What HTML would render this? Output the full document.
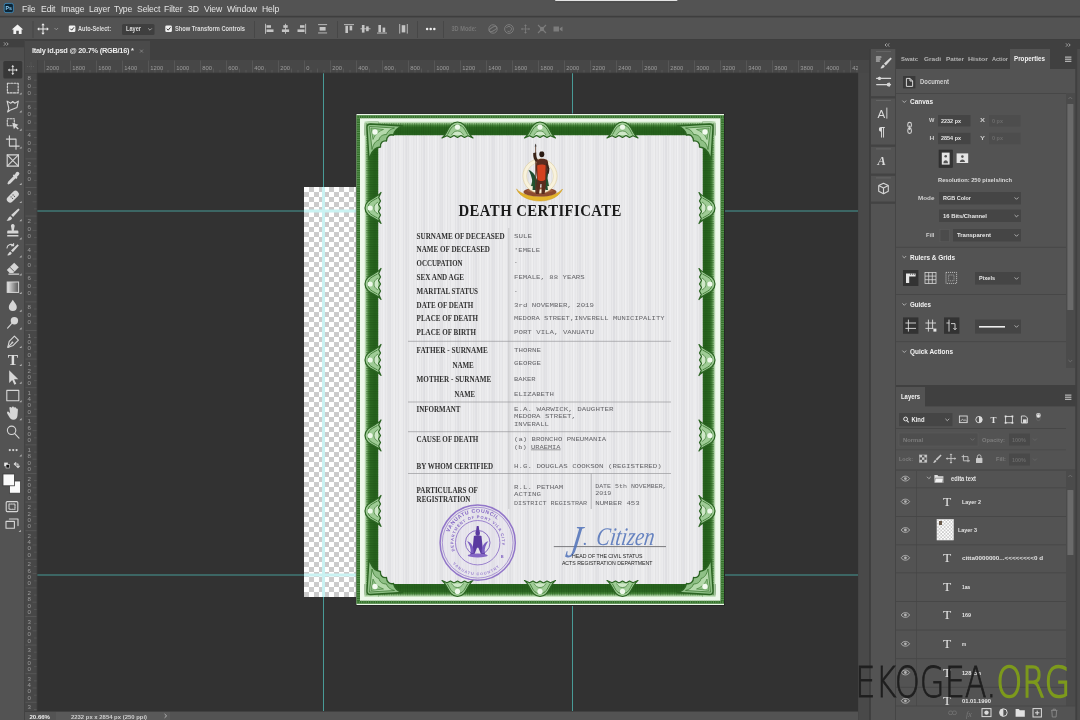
<!DOCTYPE html>
<html>
<head>
<meta charset="utf-8">
<title>Photoshop</title>
<style>
*{box-sizing:border-box;margin:0;padding:0}
html,body{width:1080px;height:720px;overflow:hidden;background:#535353;font-family:"Liberation Sans",sans-serif;color:#dcdcdc}
.abs{position:absolute}
#app{position:absolute;left:0;top:0;width:1080px;height:720px;overflow:hidden;background:#535353}
#menubar{left:0;top:0;width:1080px;height:17px;background:#535353}
#menubar span{position:absolute;top:3.5px;font-size:8.6px;color:#e4e4e4;letter-spacing:-0.1px;white-space:nowrap}
#optbar{left:0;top:16px;width:1080px;height:24px;background:#535353;border-top:1.5px solid #3e3e3e}
#optbar span{position:absolute;font-size:6.4px;color:#e0e0e0;white-space:nowrap;font-weight:bold;letter-spacing:-0.2px}
#tabrow{left:25px;top:40px;width:846px;height:20px;background:#404040}
#tab{left:0;top:1px;width:125px;height:19px;background:#4a4a4a}
#tab span{position:absolute;left:7px;top:5px;font-size:7.4px;font-weight:bold;color:#ececec;white-space:nowrap;letter-spacing:-0.25px}
#toolbar{left:0;top:40px;width:24px;height:680px;background:#535353}
#hruler{left:25px;top:60px;width:839px;height:13px;background:#4b4b4b}
#vruler{left:25px;top:73px;width:12px;height:638px;background:#4b4b4b}
#canvas{left:37px;top:73px;width:823px;height:638px;background:#323232;overflow:hidden}
#status{left:25px;top:711px;width:846px;height:9px;background:#535353}
#dockgap{left:860px;top:60px;width:11px;height:660px;background:#424242}
#dock{left:871px;top:40px;width:209px;height:680px;background:#424242}
svg text{white-space:pre}
svg,#menubar,#tab{will-change:transform}
</style>
</head>
<body>
<div id="app">
<div id="menubar" class="abs">
<span style="left:22px">File</span><span style="left:41px">Edit</span><span style="left:61px">Image</span><span style="left:89px">Layer</span><span style="left:114px">Type</span><span style="left:137px">Select</span><span style="left:164px">Filter</span><span style="left:188px">3D</span><span style="left:204px">View</span><span style="left:227px">Window</span><span style="left:262px">Help</span>
</div>
<div id="optbar" class="abs"></div>
<div id="tabrow" class="abs"><div id="tab" class="abs"><span>Italy id.psd @ 20.7% (RGB/16) *</span></div></div>
<div id="toolbar" class="abs"></div>
<div id="hruler" class="abs"></div>
<div id="vruler" class="abs"></div>
<div id="canvas" class="abs">
<svg class="abs" style="left:0;top:0" width="823" height="638" viewBox="37 73 823 638">
<defs>
<pattern id="chk" x="304" y="187" width="10" height="10" patternUnits="userSpaceOnUse"><rect width="10" height="10" fill="#ffffff"/><rect x="5" width="5" height="5" fill="#cbcbcb"/><rect y="5" width="5" height="5" fill="#cbcbcb"/></pattern>
<pattern id="paper" x="0" y="0" width="2.6" height="8" patternUnits="userSpaceOnUse"><rect width="2.6" height="8" fill="#ebebed"/><rect x="0" width="0.9" height="8" fill="#e1e1e4"/></pattern>
<pattern id="paper2" x="0" y="0" width="17.3" height="8" patternUnits="userSpaceOnUse"><rect x="2" width="1.4" height="8" fill="#ffffff" opacity="0.35"/><rect x="7.6" width="2.2" height="8" fill="#cfcfd4" opacity="0.3"/><rect x="12.8" width="1.2" height="8" fill="#ffffff" opacity="0.3"/></pattern>
<pattern id="guil" x="0" y="0" width="2" height="2" patternUnits="userSpaceOnUse"><rect width="2" height="2" fill="#2e6a24"/><rect width="1" height="1" fill="#3f7c35"/><rect x="1" y="1" width="1" height="1" fill="#255a1c"/></pattern>
<linearGradient id="bandV" x1="0" y1="0" x2="0" y2="1"><stop offset="0" stop-color="#d6ebd1"/><stop offset="0.13" stop-color="#9cc692"/><stop offset="0.27" stop-color="#4a8a3e"/><stop offset="0.42" stop-color="#2c6a22"/><stop offset="0.75" stop-color="#24601b"/><stop offset="1" stop-color="#2a6621"/></linearGradient>
<linearGradient id="bandVb" x1="0" y1="1" x2="0" y2="0"><stop offset="0" stop-color="#d6ebd1"/><stop offset="0.13" stop-color="#9cc692"/><stop offset="0.27" stop-color="#4a8a3e"/><stop offset="0.42" stop-color="#2c6a22"/><stop offset="0.75" stop-color="#24601b"/><stop offset="1" stop-color="#2a6621"/></linearGradient>
<linearGradient id="bandH" x1="0" y1="0" x2="1" y2="0"><stop offset="0" stop-color="#d6ebd1"/><stop offset="0.13" stop-color="#9cc692"/><stop offset="0.27" stop-color="#4a8a3e"/><stop offset="0.42" stop-color="#2c6a22"/><stop offset="0.75" stop-color="#24601b"/><stop offset="1" stop-color="#2a6621"/></linearGradient>
<linearGradient id="bandHr" x1="1" y1="0" x2="0" y2="0"><stop offset="0" stop-color="#d6ebd1"/><stop offset="0.13" stop-color="#9cc692"/><stop offset="0.27" stop-color="#4a8a3e"/><stop offset="0.42" stop-color="#2c6a22"/><stop offset="0.75" stop-color="#24601b"/><stop offset="1" stop-color="#2a6621"/></linearGradient>
<pattern id="hatV" width="2.3" height="4" patternUnits="userSpaceOnUse"><rect width="1.1" height="4" fill="#1f5217" opacity="0.45"/></pattern>
<pattern id="hatH" width="4" height="2.3" patternUnits="userSpaceOnUse"><rect width="4" height="1.1" fill="#1f5217" opacity="0.45"/></pattern>
<g id="orn">
<path d="M-15.5,16.5 C-10,13 -9,0.5 0,0.5 C9,0.5 10,13 15.5,16.5 L10.5,14.2 L7,16 L3.5,14 L0,16 L-3.5,14 L-7,16 L-10.5,14.2 Z" fill="#9fcc96" stroke="#2b6422" stroke-width="1.2" stroke-linejoin="round"/>
<path d="M-10,13 C-7,8 -6,3.5 0,3.5 C6,3.5 7,8 10,13" fill="none" stroke="#3d7a33" stroke-width="0.9"/>
<path d="M-6,13.5 C-4,10.5 -2.5,9.5 0,9.5 C2.5,9.5 4,10.5 6,13.5" fill="#cfe8c8" stroke="#3d7a33" stroke-width="0.7"/>
<circle cx="0" cy="5.6" r="2.6" fill="#eef8ea"/>
</g>
<g id="corner">
<path d="M2.5,6 C2.5,3.5 3.5,2.5 6,2.5 L38,4.5 C33,6 30,8.5 29,13.5 C25,12.5 22,15 22,19.5 C18,19 15.5,21.5 16,25.5 C11,26 8,29 6,34 L4.5,38 Z" fill="#8fc086" stroke="#2b6422" stroke-width="1.3" stroke-linejoin="round"/>
<path d="M5,5 L30,6.5 C25,8 23,10 22,13 C18,13 15,15 14.5,18.5 C11,19.5 9,22 7.5,28 Z" fill="#b4d9ab" stroke="#3d7a33" stroke-width="0.8"/>
<path d="M6.5,6.5 L19,8 C15,9.5 11,12 8.5,18 Z" fill="#8fc086" stroke="#3d7a33" stroke-width="0.6"/>
<circle cx="10.5" cy="10.5" r="2.7" fill="#f4fbf1"/>
</g>
</defs>
<rect x="304" y="187" width="54" height="410" fill="url(#chk)"/>
<rect x="323.0" y="73" width="1" height="638" fill="#4aa5a1" opacity="0.9"/>
<rect x="572.0" y="73" width="1" height="638" fill="#4aa5a1" opacity="0.9"/>
<rect x="37" y="210.5" width="823" height="1" fill="#4aa5a1" opacity="0.9"/>
<rect x="37" y="574.5" width="823" height="1" fill="#4aa5a1" opacity="0.9"/>
<rect x="322" y="187" width="3" height="410" fill="#c9f2f2"/>
<rect x="304" y="209.5" width="54" height="3" fill="#c9f2f2"/>
<rect x="304" y="573.5" width="54" height="3" fill="#c9f2f2"/>
<g>
<rect x="355.9" y="113.6" width="369.1" height="492.4" fill="#262626"/>
<rect x="356.5" y="114" width="367.5" height="491" fill="#eef8eb"/>
<path fill-rule="evenodd" fill="#34702a" d="M356.5,115.2H724V603.8H356.5Z M360.0,118.3V600.7H720.5V118.3Z"/>
<path fill="none" stroke="#6aa062" stroke-width="3" stroke-dasharray="1 1.3" opacity="0.7" d="M356.5,116.75H724 M356.5,602.25H724"/>
<path fill="none" stroke="#6aa062" stroke-width="3.4" stroke-dasharray="1 1.3" opacity="0.7" d="M358.25,118.3V600.7 M722.25,118.3V600.7"/>
<rect x="364.5" y="121.5" width="351.0" height="14.0" fill="url(#bandV)"/>
<rect x="364.5" y="584" width="351.0" height="13" fill="url(#bandVb)"/>
<rect x="364.5" y="121.5" width="14.0" height="475.5" fill="url(#bandH)"/>
<rect x="702.5" y="121.5" width="13.0" height="475.5" fill="url(#bandHr)"/>
<rect x="364.5" y="123.0" width="351.0" height="12.5" fill="url(#hatV)"/>
<rect x="364.5" y="584" width="351.0" height="11.5" fill="url(#hatV)"/>
<rect x="366.0" y="135.5" width="12.5" height="448.5" fill="url(#hatH)"/>
<rect x="702.5" y="135.5" width="11.5" height="448.5" fill="url(#hatH)"/>
<polygon points="364.5,121.5 378.5,135.5 378.5,121.5" fill="url(#bandV)"/>
<polygon points="715.5,121.5 702.5,135.5 702.5,121.5" fill="url(#bandV)"/>
<polygon points="364.5,597 378.5,584 378.5,597" fill="url(#bandVb)"/>
<polygon points="715.5,597 702.5,584 702.5,597" fill="url(#bandVb)"/>
<rect x="378.5" y="135.5" width="324.0" height="448.5" fill="url(#paper)"/>
<rect x="378.5" y="135.5" width="324.0" height="448.5" fill="url(#paper2)"/>
<use href="#orn" transform="translate(457.5,121.5)"/>
<use href="#orn" transform="translate(457.5,597) scale(1,-1)"/>
<use href="#orn" transform="translate(540,121.5)"/>
<use href="#orn" transform="translate(540,597) scale(1,-1)"/>
<use href="#orn" transform="translate(622.5,121.5)"/>
<use href="#orn" transform="translate(622.5,597) scale(1,-1)"/>
<use href="#orn" transform="translate(364.5,208) rotate(-90)"/>
<use href="#orn" transform="translate(715.5,208) rotate(90)"/>
<use href="#orn" transform="translate(364.5,284) rotate(-90)"/>
<use href="#orn" transform="translate(715.5,284) rotate(90)"/>
<use href="#orn" transform="translate(364.5,360) rotate(-90)"/>
<use href="#orn" transform="translate(715.5,360) rotate(90)"/>
<use href="#orn" transform="translate(364.5,435.5) rotate(-90)"/>
<use href="#orn" transform="translate(715.5,435.5) rotate(90)"/>
<use href="#orn" transform="translate(364.5,511) rotate(-90)"/>
<use href="#orn" transform="translate(715.5,511) rotate(90)"/>
<use href="#corner" transform="translate(364.5,121.5)"/>
<use href="#corner" transform="translate(715.5,121.5) scale(-1,1)"/>
<use href="#corner" transform="translate(364.5,597) scale(1,-1)"/>
<use href="#corner" transform="translate(715.5,597) scale(-1,-1)"/>
</g>
<style>
.ttl{font:bold 17.2px "Liberation Serif",serif;fill:#1b1b1b}
.lb{font:bold 7.5px "Liberation Serif",serif;fill:#303030}
.vl{font:5.9px "Liberation Mono",monospace;fill:#66666a}
.sg{font:4.9px "Liberation Sans",sans-serif;fill:#222}
.ln{stroke:#99999c;stroke-width:0.7}
</style>
<g>
<text class="ttl" transform="translate(458.5,216.2) scale(0.86,1)" x="0" y="0" textLength="189.5" lengthAdjust="spacing">DEATH CERTIFICATE</text>
<line class="ln" x1="408" y1="341.3" x2="671" y2="341.3"/>
<line class="ln" x1="408" y1="402" x2="671" y2="402"/>
<line class="ln" x1="408" y1="431.7" x2="671" y2="431.7"/>
<line class="ln" x1="408" y1="473.5" x2="671" y2="473.5"/>
<line class="ln" x1="508.8" y1="228" x2="508.8" y2="509" opacity="0.55"/>
<line class="ln" x1="591.2" y1="473.5" x2="591.2" y2="509"/>
<text x="416.6" y="239.3" textLength="88.1" lengthAdjust="spacingAndGlyphs" class="lb">SURNAME OF DECEASED</text>
<text x="416.6" y="252.2" textLength="73.4" lengthAdjust="spacingAndGlyphs" class="lb">NAME OF DECEASED</text>
<text x="416.6" y="265.6" textLength="46.0" lengthAdjust="spacingAndGlyphs" class="lb">OCCUPATION</text>
<text x="416.6" y="279.9" textLength="47.4" lengthAdjust="spacingAndGlyphs" class="lb">SEX AND AGE</text>
<text x="416.6" y="294.0" textLength="61.4" lengthAdjust="spacingAndGlyphs" class="lb">MARITAL STATUS</text>
<text x="416.6" y="307.8" textLength="56.7" lengthAdjust="spacingAndGlyphs" class="lb">DATE OF DEATH</text>
<text x="416.6" y="321.2" textLength="61.4" lengthAdjust="spacingAndGlyphs" class="lb">PLACE OF DEATH</text>
<text x="416.6" y="334.6" textLength="59.4" lengthAdjust="spacingAndGlyphs" class="lb">PLACE OF BIRTH</text>
<text x="416.6" y="353.3" textLength="71.2" lengthAdjust="spacingAndGlyphs" class="lb">FATHER - SURNAME</text>
<text x="452.4" y="367.8" textLength="21.4" lengthAdjust="spacingAndGlyphs" class="lb">NAME</text>
<text x="416.6" y="382.0" textLength="74.7" lengthAdjust="spacingAndGlyphs" class="lb">MOTHER - SURNAME</text>
<text x="454.5" y="396.8" textLength="20.5" lengthAdjust="spacingAndGlyphs" class="lb">NAME</text>
<text x="416.6" y="412.3" textLength="43.8" lengthAdjust="spacingAndGlyphs" class="lb">INFORMANT</text>
<text x="416.6" y="441.9" textLength="61.8" lengthAdjust="spacingAndGlyphs" class="lb">CAUSE OF DEATH</text>
<text x="416.6" y="468.7" textLength="76.6" lengthAdjust="spacingAndGlyphs" class="lb">BY WHOM CERTIFIED</text>
<text x="416.6" y="492.7" textLength="61.3" lengthAdjust="spacingAndGlyphs" class="lb">PARTICULARS OF</text>
<text x="416.6" y="502.0" textLength="53.8" lengthAdjust="spacingAndGlyphs" class="lb">REGISTRATION</text>
<text x="514.0" y="238.0" textLength="18.0" lengthAdjust="spacingAndGlyphs" class="vl">SULE</text>
<text x="514.0" y="251.6" textLength="26.0" lengthAdjust="spacingAndGlyphs" class="vl">'EMELE</text>
<text x="514.0" y="263.5" class="vl">-</text>
<text x="514.0" y="278.8" textLength="70.7" lengthAdjust="spacingAndGlyphs" class="vl">FEMALE, 88 YEARS</text>
<text x="514.0" y="292.5" class="vl">-</text>
<text x="514.0" y="307.0" textLength="80.0" lengthAdjust="spacingAndGlyphs" class="vl">3rd NOVEMBER, 2019</text>
<text x="514.0" y="320.2" textLength="150.5" lengthAdjust="spacingAndGlyphs" class="vl">MEDORA STREET,INVERELL MUNICIPALITY</text>
<text x="514.0" y="333.8" textLength="80.0" lengthAdjust="spacingAndGlyphs" class="vl">PORT VILA, VANUATU</text>
<text x="514.0" y="351.6" textLength="27.0" lengthAdjust="spacingAndGlyphs" class="vl">THORNE</text>
<text x="514.0" y="365.3" textLength="27.0" lengthAdjust="spacingAndGlyphs" class="vl">GEORGE</text>
<text x="514.0" y="381.2" textLength="21.6" lengthAdjust="spacingAndGlyphs" class="vl">BAKER</text>
<text x="514.0" y="396.2" textLength="39.9" lengthAdjust="spacingAndGlyphs" class="vl">ELIZABETH</text>
<text x="514.0" y="410.7" textLength="99.5" lengthAdjust="spacingAndGlyphs" class="vl">E.A. WARWICK, DAUGHTER</text>
<text x="514.0" y="417.9" textLength="61.9" lengthAdjust="spacingAndGlyphs" class="vl">MEDORA STREET,</text>
<text x="514.0" y="425.5" textLength="35.0" lengthAdjust="spacingAndGlyphs" class="vl">INVERALL</text>
<text x="514.0" y="441.0" textLength="92.2" lengthAdjust="spacingAndGlyphs" class="vl">(a) BRONCHO PNEUMANIA</text>
<text x="514.0" y="448.6" textLength="46.6" lengthAdjust="spacingAndGlyphs" class="vl">(b) <tspan text-decoration="underline">URAEMIA</tspan></text>
<text x="514.0" y="468.0" textLength="147.8" lengthAdjust="spacingAndGlyphs" class="vl">H.G. DOUGLAS COOKSON (REGISTERED)</text>
<text x="514.0" y="488.6" textLength="49.3" lengthAdjust="spacingAndGlyphs" class="vl">R.L. PETHAM</text>
<text x="514.0" y="495.9" textLength="27.0" lengthAdjust="spacingAndGlyphs" class="vl">ACTING</text>
<text x="514.0" y="505.3" textLength="73.2" lengthAdjust="spacingAndGlyphs" class="vl">DISTRICT REGISTRAR</text>
<text x="595.2" y="487.8" textLength="71.4" lengthAdjust="spacingAndGlyphs" class="vl">DATE 5th NOVEMBER,</text>
<text x="595.2" y="494.5" textLength="16.1" lengthAdjust="spacingAndGlyphs" class="vl">2019</text>
<text x="595.2" y="505.3" textLength="44.6" lengthAdjust="spacingAndGlyphs" class="vl">NUMBER 453</text>
</g>
<g>
<g>
<path d="M516.5,189 C520,197.5 531,201 540,201 C549,201 559,197.5 562.5,189 C558,194.5 549,196.5 540,196.5 C531,196.5 521,194.5 516.5,189 Z" fill="#e3b32a" stroke="#c9951a" stroke-width="0.5"/>
<ellipse cx="540" cy="192" rx="16.5" ry="4.6" fill="#8c4a30"/><ellipse cx="540" cy="190.6" rx="13" ry="2.4" fill="#a05c3c"/>
<circle cx="540" cy="176" r="15.3" fill="none" stroke="#f8f2dc" stroke-width="3.6"/>
<circle cx="540" cy="176" r="17.1" fill="none" stroke="#dccb98" stroke-width="0.6"/><circle cx="540" cy="176" r="13.5" fill="none" stroke="#e2d4a6" stroke-width="0.5"/>
<path d="M528.5,170 C533,171 537,177 538,184 L536,190 L532.5,190 C533.5,184 532,176 528.5,170 Z" fill="#1f4d30"/>
<path d="M549.5,168 C546,171 543.5,177 544,184 L545.5,190 L548,190 C546.5,183 547.5,175 549.5,168 Z" fill="#1f4d30"/>
<path d="M531,186 L533,178 L535,186 Z M546,186 L547.5,178 L549,186 Z" fill="#24552f"/>
<line x1="535.6" y1="144.5" x2="535.6" y2="193" stroke="#5b3a26" stroke-width="0.8"/>
<path d="M535.6,143.5 l0.9,3 l-1.8,0 Z" fill="#444"/>
<path d="M533.2,153 C533,157 534,160.5 536.5,162 L538.5,160.5 C536.5,158.5 536,155.5 536.2,152.5 Z" fill="#3a2418"/>
<ellipse cx="541.8" cy="154.2" rx="2.5" ry="3" fill="#2a1a12"/>
<path d="M541.6,148.2 l0.7,3 l-1.4,0 Z" fill="#eee"/>
<path d="M536.5,160.5 C539,158 545,158 547.5,160.5 C549,164 548,168 547,171 L546,181 C546,184 545.5,190 544.5,194 L541.5,194 L541.5,184 L540.5,184 L539,194 L536,194 C536,188 536.5,182 537,178 C536,173 535.5,166 536.5,160.5 Z" fill="#5a2c1e"/>
<path d="M537.2,165.5 C539.5,164.3 543.5,164.3 545.6,165.5 L545.2,179.5 C543,181.6 540,181.6 537.6,179.5 Z" fill="#d4421f"/>
<path d="M547,163 C549.5,166 550,170 548.5,174 L546.8,173 C547.6,169.5 547.4,166.5 546,164.5 Z" fill="#3a2418"/>
</g>
<g fill="none" stroke="#9276c9">
<circle cx="477.7" cy="542.7" r="37.6" stroke-width="1.5" fill="#e2dcf0" fill-opacity="0.3"/>
<circle cx="477.7" cy="542.7" r="35.4" stroke-width="0.7"/>
<circle cx="477.7" cy="542.7" r="22.2" stroke-width="0.9"/>
<circle cx="477.7" cy="542.7" r="12.3" stroke-width="0.9" stroke="#7c5cbc"/>
</g>
<defs><path id="st1" d="M449.32,532.37 A30.2,30.2 0 0 1 498.30,520.61" fill="none"/><path id="st2" d="M454.87,551.01 A24.3,24.3 0 1 1 501.70,546.50" fill="none"/><path id="st3" d="M452.73,563.65 A32.6,32.6 0 0 0 501.93,564.51" fill="none"/></defs>
<g style="font:bold 5.2px 'Liberation Sans',sans-serif" fill="#8466c4">
<text><textPath href="#st1" textLength="58" lengthAdjust="spacing">VANUATU COUNCIL</textPath></text>
<text style="font-size:4px"><textPath href="#st2" textLength="87" lengthAdjust="spacing">DEPARTMENT OF PORT VILA CITY</textPath></text>
<text style="font-size:3.8px" fill="#9a80d0"><textPath href="#st3" textLength="52" lengthAdjust="spacing">VANUATU COUNTRY</textPath></text>
<text x="500.8" y="557.5" style="font-size:4px">B</text>
</g>
<g fill="#5a3aa0" transform="translate(477.7,543.7) scale(1.18) translate(-477.7,-542.7)">
<path d="M476.9,527.7 l1.6,0 l0.6,4 l-2.8,0 Z"/>
<ellipse cx="477.7" cy="533.7" rx="1.9" ry="2.3"/>
<path d="M474.5,536.2 C476.7,535.2 478.7,535.2 480.9,536.2 L481.9,545.7 L484.2,552.2 L480.7,552.2 L478.3,546.2 L477.09999999999997,546.2 L474.7,552.2 L471.2,552.2 L473.5,545.7 Z"/>
<path d="M468.7,540.7 C472.7,541.7 474.7,545.7 474.2,550.7 L471.7,550.7 C472.2,546.7 470.7,543.2 468.7,540.7 Z M486.7,540.7 C482.7,541.7 480.7,545.7 481.2,550.7 L483.7,550.7 C483.2,546.7 484.7,543.2 486.7,540.7 Z" fill="#7a5cc0"/>
<ellipse cx="477.7" cy="552.7" rx="8.5" ry="1.6" fill="#8466c4"/>
</g>
<line x1="553.8" y1="546.6" x2="666" y2="546.6" stroke="#6e6e72" stroke-width="0.9"/>
<g fill="#5878bc" opacity="0.9" style="font-family:'Liberation Serif',serif;font-style:italic">
<text x="564.5" y="557.3" font-size="46" transform="skewX(-10)" style="transform-origin:564.5px 557.3px" textLength="14" lengthAdjust="spacingAndGlyphs">J</text>
<text x="583" y="545.4" font-size="18">.</text>
<text x="595.5" y="544.6" font-size="25.5" transform="skewX(-8)" style="transform-origin:595px 544.6px" textLength="58" lengthAdjust="spacingAndGlyphs">Citizen</text>
</g>
<text class="sg" x="571.9" y="558.2" textLength="70.6" lengthAdjust="spacingAndGlyphs">HEAD OF THE CIVIL STATUS</text>
<text class="sg" x="561.9" y="565" textLength="90.6" lengthAdjust="spacingAndGlyphs">ACTS REGISTRATION DEPARTMENT</text>
</g>

</svg>
</div>
<svg class="abs" style="left:0;top:0" width="1080" height="720" viewBox="0 0 1080 720" font-family="Liberation Sans, sans-serif">
<rect x="4.2" y="3.4" width="9.2" height="9.2" fill="#0c2638" rx="1.8" stroke="#3b8fc4" stroke-width="0.8"/>
<text x="5.6" y="10.4" font-size="5.2" fill="#8fd0f8" font-weight="bold">Ps</text>
<rect x="555" y="-1" width="122.5" height="2" fill="#e4e4e4" rx="1"/>
<rect x="556" y="1.6" width="120.5" height="0.8" fill="#494949"/>
<rect x="0" y="15.8" width="1080" height="1.6" fill="#3e3e3e"/>
<rect x="0" y="39" width="1080" height="1" fill="#3e3e3e"/>
<path d="M17.5,24.5 L11.8,29.6 L13.4,29.6 L13.4,34 L16.2,34 L16.2,30.8 L18.8,30.8 L18.8,34 L21.6,34 L21.6,29.6 L23.2,29.6 Z" fill="#f2f2f2"/>
<rect x="32.5" y="21" width="1" height="17" fill="#474747"/>
<g transform="translate(43,29) scale(1)" stroke="#ececec" stroke-width="1" fill="#ececec"><path d="M0,-4.6V4.6M-4.6,0H4.6" fill="none"/><path d="M0,-5.8l1.7,2h-3.4zM0,5.8l1.7,-2h-3.4zM-5.8,0l2,-1.7v3.4zM5.8,0l-2,-1.7v3.4z" stroke="none"/></g>
<path d="M54.5,28 l1.8,1.8 l1.8,-1.8" fill="none" stroke="#9a9a9a" stroke-width="0.9"/>
<rect x="68.8" y="25.4" width="6.6" height="6.6" fill="#f0f0f0" rx="1.3"/>
<path d="M70.3,28.7 l1.4,1.5 l2.3,-2.9" fill="none" stroke="#333" stroke-width="1"/>
<text x="78" y="31.2" textLength="33.0" lengthAdjust="spacingAndGlyphs" font-size="6.3" fill="#dedede" font-weight="bold">Auto-Select:</text>
<rect x="122" y="24" width="32.5" height="11" fill="#3f3f3f" rx="1.5"/>
<text x="126" y="31.4" textLength="15.0" lengthAdjust="spacingAndGlyphs" font-size="6.3" fill="#dedede" font-weight="bold">Layer</text>
<path d="M148.2,28.4 l1.8,1.8 l1.8,-1.8" fill="none" stroke="#b0b0b0" stroke-width="0.9"/>
<rect x="165.3" y="25.4" width="6.6" height="6.6" fill="#f0f0f0" rx="1.3"/>
<path d="M166.8,28.7 l1.4,1.5 l2.3,-2.9" fill="none" stroke="#333" stroke-width="1"/>
<text x="175" y="31.2" textLength="70.0" lengthAdjust="spacingAndGlyphs" font-size="6.3" fill="#dedede" font-weight="bold">Show Transform Controls</text>
<rect x="254" y="21" width="1" height="17" fill="#474747"/>
<rect x="265" y="23.8" width="0.9" height="10" fill="#c4c4c4"/>
<rect x="266.5" y="25.2" width="4.5" height="2.6" fill="#c4c4c4"/>
<rect x="266.5" y="29.400000000000002" width="7" height="2.6" fill="#c4c4c4"/>
<rect x="285.05" y="23.8" width="0.9" height="10" fill="#c4c4c4"/>
<rect x="283.3" y="25.2" width="4.4" height="2.6" fill="#c4c4c4"/>
<rect x="281.9" y="29.400000000000002" width="7.2" height="2.6" fill="#c4c4c4"/>
<rect x="305.2" y="23.8" width="0.9" height="10" fill="#c4c4c4"/>
<rect x="300" y="25.2" width="4.5" height="2.6" fill="#c4c4c4"/>
<rect x="297.5" y="29.400000000000002" width="7" height="2.6" fill="#c4c4c4"/>
<rect x="318.1" y="24.200000000000003" width="9" height="0.9" fill="#c4c4c4"/>
<rect x="318.1" y="32.5" width="9" height="0.9" fill="#c4c4c4"/>
<rect x="319.6" y="27.0" width="6" height="3.6" fill="#c4c4c4"/>
<rect x="337" y="21" width="1" height="17" fill="#474747"/>
<rect x="344" y="24.200000000000003" width="10" height="0.9" fill="#c4c4c4"/>
<rect x="345.4" y="25.8" width="2.6" height="7.2" fill="#c4c4c4"/>
<rect x="349.6" y="25.8" width="2.6" height="4.6" fill="#c4c4c4"/>
<rect x="360.5" y="28.35" width="10" height="0.9" fill="#c4c4c4"/>
<rect x="361.9" y="25.0" width="2.6" height="7.6" fill="#c4c4c4"/>
<rect x="366.1" y="26.400000000000002" width="2.6" height="4.8" fill="#c4c4c4"/>
<rect x="377" y="32.6" width="10" height="0.9" fill="#c4c4c4"/>
<rect x="378.4" y="25.0" width="2.6" height="7.2" fill="#c4c4c4"/>
<rect x="382.6" y="27.6" width="2.6" height="4.6" fill="#c4c4c4"/>
<rect x="399.3" y="24.0" width="0.9" height="9.6" fill="#c4c4c4"/>
<rect x="406.8" y="24.0" width="0.9" height="9.6" fill="#c4c4c4"/>
<rect x="401.7" y="25.2" width="3.6" height="7.2" fill="#c4c4c4"/>
<rect x="417" y="21" width="1" height="17" fill="#474747"/>
<circle cx="427.09999999999997" cy="29" r="1.25" fill="#f0f0f0"/>
<circle cx="430.7" cy="29" r="1.25" fill="#f0f0f0"/>
<circle cx="434.3" cy="29" r="1.25" fill="#f0f0f0"/>
<rect x="443" y="21" width="1" height="17" fill="#474747"/>
<text x="451.5" y="31.2" textLength="25.2" lengthAdjust="spacingAndGlyphs" font-size="6.3" fill="#777" font-weight="bold">3D Mode:</text>
<g fill="none" stroke="#7c7c7c" stroke-width="1"><circle cx="493" cy="29" r="4.2"/><ellipse cx="493" cy="29" rx="4.2" ry="1.7" transform="rotate(-30 493 29)"/><circle cx="509" cy="29" r="4.4"/><path d="M506.5,28 a2.6,2.6 0 1 1 1,3.2"/></g>
<g transform="translate(525.5,29) scale(0.8)" stroke="#7c7c7c" stroke-width="1" fill="#7c7c7c"><path d="M0,-4.6V4.6M-4.6,0H4.6" fill="none"/><path d="M0,-5.8l1.7,2h-3.4zM0,5.8l1.7,-2h-3.4zM-5.8,0l2,-1.7v3.4zM5.8,0l-2,-1.7v3.4z" stroke="none"/></g>
<g stroke="#7c7c7c" stroke-width="1.1" fill="#7c7c7c"><path d="M538,25 l8,8 M546,25 l-8,8" fill="none"/><circle cx="542" cy="29" r="1.6"/></g>
<path d="M553.5,26.5 h5.5 v5 h-5.5 z M559.8,28.2 l2.7,-1.6 v4.8 l-2.7,-1.6 z" fill="#7c7c7c"/>
<path d="M140,49.6 l3,3 M143,49.6 l-3,3" stroke="#8a8a8a" stroke-width="0.8" fill="none"/>
<rect x="0" y="40" width="25" height="7.6" fill="#404040"/>
<rect x="0" y="47.6" width="24" height="13" fill="#4e4e4e"/>
<path d="M4,42.4 l1.6,1.6 l-1.6,1.6 M6.6,42.4 l1.6,1.6 l-1.6,1.6" fill="none" stroke="#bdbdbd" stroke-width="0.8"/>
<rect x="24" y="40" width="1" height="680" fill="#434343"/>
<rect x="3.3" y="61" width="19" height="17.4" fill="#383838" rx="1.5"/>
<g transform="translate(12.8,70) scale(0.85)" stroke="#ececec" stroke-width="1" fill="#ececec"><path d="M0,-4.6V4.6M-4.6,0H4.6" fill="none"/><path d="M0,-5.8l1.7,2h-3.4zM0,5.8l1.7,-2h-3.4zM-5.8,0l2,-1.7v3.4zM5.8,0l-2,-1.7v3.4z" stroke="none"/></g>
<g transform="translate(0.8,0.5)">
<rect x="6.6" y="82.8" width="10.8" height="9.6" fill="none" stroke="#d6d6d6" stroke-width="1.1" stroke-linejoin="round" stroke-linecap="round" stroke-dasharray="2 1.3"/>
<path d="M20.8,94.10000000000001 v-2.2 l-2.2,2.2 z" fill="#b5b5b5"/>
</g>
<g transform="translate(0.8,2.1)">
<path d="M6.3,99 l3.6,2.2 l2,-1.8 l2.2,1.8 l3.4,-2.2 l-1.3,6.4 l-3.8,1.5 l-3.2,1.2 l-2.4,1.8 l1.2,-3.6 z" fill="none" stroke="#d6d6d6" stroke-width="1.1" stroke-linejoin="round" stroke-linecap="round"/>
<path d="M20.8,110.4 v-2.2 l-2.2,2.2 z" fill="#b5b5b5"/>
</g>
<g transform="translate(0.8,1.3)">
<path d="M6.5,117.5 h7 v7 h-7 z" fill="none" stroke="#d6d6d6" stroke-width="1.1" stroke-linejoin="round" stroke-linecap="round" stroke-dasharray="1.6 1.2"/><path d="M11.5,121.5 l1.6,6.4 l1.5,-2 l2.4,2.4 l1,-1 l-2.4,-2.4 l2,-1.4 z" fill="#d6d6d6"/>
<path d="M20.8,129.4 v-2.2 l-2.2,2.2 z" fill="#b5b5b5"/>
</g>
<g transform="translate(0.8,1.5)">
<path d="M8.6,134.4 v10.2 h9.8 M5.6,137.6 h9.6 v10.2" fill="none" stroke="#d6d6d6" stroke-width="1.1" stroke-linejoin="round" stroke-linecap="round" stroke-width="1.3"/>
<path d="M20.8,147.1 v-2.2 l-2.2,2.2 z" fill="#b5b5b5"/>
</g>
<g transform="translate(0.8,1.5)">
<rect x="6.4" y="153.4" width="11.2" height="11.2" fill="none" stroke="#d6d6d6" stroke-width="1.1" stroke-linejoin="round" stroke-linecap="round"/><path d="M6.4,153.4 l11.2,11.2 M17.6,153.4 l-11.2,11.2" fill="none" stroke="#d6d6d6" stroke-width="1.1" stroke-linejoin="round" stroke-linecap="round" stroke-width="0.9"/>
</g>
<g transform="translate(0.8,0.6)">
<path d="M15.2,171.8 a1.9,1.9 0 0 1 2.8,2.7 l-2,2 l0.7,0.7 l-1.2,1.2 l-0.7,-0.7 l-5.2,5.2 l-2.2,0.9 l-0.8,-0.8 l0.9,-2.2 l5.2,-5.2 l-0.7,-0.7 l1.2,-1.2 l0.7,0.7 z" fill="#d6d6d6"/>
<path d="M20.8,184.4 v-2.2 l-2.2,2.2 z" fill="#b5b5b5"/>
</g>
<g transform="translate(0.8,0.7)">
<g transform="rotate(-45 12 196)"><rect x="5" y="192.8" width="14" height="6.4" rx="3" fill="#d6d6d6"/><circle cx="10.6" cy="195" r="0.6" fill="#535353"/><circle cx="13.4" cy="195" r="0.6" fill="#535353"/><circle cx="10.6" cy="197" r="0.6" fill="#535353"/><circle cx="13.4" cy="197" r="0.6" fill="#535353"/></g>
<path d="M20.8,202.4 v-2.2 l-2.2,2.2 z" fill="#b5b5b5"/>
</g>
<g transform="translate(0.8,0.8)">
<path d="M17.6,207.6 l1.3,1.3 l-6.6,7.4 l-2,-2 z M9.4,215.4 l1.9,1.9 c-0.6,2.2 -3,3.2 -5.6,2.6 c1.6,-0.8 1.6,-3.4 3.7,-4.5 z" fill="#d6d6d6"/>
<path d="M20.8,220.4 v-2.2 l-2.2,2.2 z" fill="#b5b5b5"/>
</g>
<g transform="translate(0.8,0.4)">
<path d="M10.3,226.4 a1.9,1.9 0 1 1 3.4,0 l-0.7,3.6 h3.6 a1,1 0 0 1 1,1 v2.2 h-11.2 v-2.2 a1,1 0 0 1 1,-1 h3.6 z M6.4,234.6 h11.2 v1.6 h-11.2 z" fill="#d6d6d6"/>
<path d="M20.8,239.1 v-2.2 l-2.2,2.2 z" fill="#b5b5b5"/>
</g>
<g transform="translate(0.8,1)">
<path d="M16.8,243.2 l1.2,1.2 l-6,6.8 l-1.8,-1.8 z M9.4,250.4 l1.6,1.6 c-0.5,1.9 -2.6,2.8 -4.8,2.3 c1.4,-0.7 1.4,-3 3.2,-3.9 z" fill="#d6d6d6"/><path d="M6.2,247 a3.8,3.8 0 0 1 6.4,-2.6 M12.8,242.6 v2.2 h-2.2" fill="none" stroke="#d6d6d6" stroke-width="1.1" stroke-linejoin="round" stroke-linecap="round" stroke-width="0.9"/>
<path d="M20.8,256.4 v-2.2 l-2.2,2.2 z" fill="#b5b5b5"/>
</g>
<g transform="translate(0.8,1.1)">
<path d="M13.4,261.6 l4.6,4.6 l-5.6,5.6 h-3.6 l-2.8,-2.8 z" fill="#d6d6d6"/><path d="M8,273 h10" fill="none" stroke="#d6d6d6" stroke-width="1.1" stroke-linejoin="round" stroke-linecap="round" stroke-width="0.9"/><path d="M9,266 l4.6,4.6" stroke="#535353" stroke-width="0.9"/>
<path d="M20.8,274.4 v-2.2 l-2.2,2.2 z" fill="#b5b5b5"/>
</g>
<g transform="translate(0.8,2)">
<defs><linearGradient id="tg" x1="0" x2="1"><stop offset="0" stop-color="#e8e8e8"/><stop offset="1" stop-color="#555"/></linearGradient></defs><rect x="6.4" y="280" width="11.4" height="10.4" fill="url(#tg)" stroke="#d6d6d6" stroke-width="1"/>
<path d="M20.8,291.9 v-2.2 l-2.2,2.2 z" fill="#b5b5b5"/>
</g>
<g transform="translate(0.8,0.3)">
<path d="M12,299.4 c1.6,2.6 4,4.8 4,7.4 a4,4 0 0 1 -8,0 c0,-2.6 2.4,-4.8 4,-7.4 z" fill="#d6d6d6"/>
<path d="M20.8,311.4 v-2.2 l-2.2,2.2 z" fill="#b5b5b5"/>
</g>
<g transform="translate(0.8,0.4)">
<circle cx="13.6" cy="320.4" r="3.7" fill="#d6d6d6"/><path d="M10.8,323.2 l-4,4.6" fill="none" stroke="#d6d6d6" stroke-width="1.1" stroke-linejoin="round" stroke-linecap="round" stroke-width="1.8"/>
<path d="M20.8,329.09999999999997 v-2.2 l-2.2,2.2 z" fill="#b5b5b5"/>
</g>
<g transform="translate(0.8,-0.2)">
<path d="M7,347.6 l1.4,-6 l5.2,-5.2 l4,4 l-5.2,5.2 z" fill="none" stroke="#d6d6d6" stroke-width="1.1" stroke-linejoin="round" stroke-linecap="round"/><circle cx="11.6" cy="342.6" r="1" fill="#d6d6d6"/><path d="M7.2,347.4 l3.6,-3.8" fill="none" stroke="#d6d6d6" stroke-width="1.1" stroke-linejoin="round" stroke-linecap="round" stroke-width="0.8"/>
<path d="M20.8,348.09999999999997 v-2.2 l-2.2,2.2 z" fill="#b5b5b5"/>
</g>
<g transform="translate(0.8,0.6)">
<text x="12" y="364.6" text-anchor="middle" font-family="Liberation Serif, serif" font-size="15.5" font-weight="bold" fill="#dcdcdc">T</text>
<path d="M20.8,365.4 v-2.2 l-2.2,2.2 z" fill="#b5b5b5"/>
</g>
<g transform="translate(0.8,0.7)">
<path d="M8.4,369.6 v12.6 l3,-2.8 l2.2,4.6 l1.9,-0.9 l-2.2,-4.5 h4.2 z" fill="#d6d6d6"/>
<path d="M20.8,383.09999999999997 v-2.2 l-2.2,2.2 z" fill="#b5b5b5"/>
</g>
<g transform="translate(0.8,0.8)">
<rect x="6" y="389.6" width="12" height="10.4" fill="none" stroke="#d6d6d6" stroke-width="1.1" stroke-linejoin="round" stroke-linecap="round"/>
<path d="M20.8,401.4 v-2.2 l-2.2,2.2 z" fill="#b5b5b5"/>
</g>
<g transform="translate(0.8,0.9)">
<path d="M8.2,415.6 c-1.6,-2.6 -2.6,-4 -1.6,-4.8 c0.9,-0.7 1.8,0.5 2.8,1.8 l-0.8,-5.2 c-0.2,-1.5 1.6,-1.7 1.9,-0.3 l0.6,-1 c0.6,-1 2,-0.6 2,0.6 l0.5,-0.2 c0.9,-0.5 1.9,0.1 1.8,1.2 c1,-0.3 1.8,0.3 1.7,1.4 l-0.4,5.4 c-0.2,2.4 -1.4,4.4 -4.2,4.4 c-2.2,0 -3.4,-1.4 -4.3,-3.3 z" fill="#d6d6d6"/>
<path d="M20.8,419.4 v-2.2 l-2.2,2.2 z" fill="#b5b5b5"/>
</g>
<g transform="translate(0.8,0.3)">
<circle cx="10.8" cy="430" r="4.2" fill="none" stroke="#d6d6d6" stroke-width="1.1" stroke-linejoin="round" stroke-linecap="round" stroke-width="1.4"/><path d="M14,433.4 l4.2,4.4" fill="none" stroke="#d6d6d6" stroke-width="1.1" stroke-linejoin="round" stroke-linecap="round" stroke-width="2"/>
</g>
<g transform="translate(0.8,0.1)">
<circle cx="9.0" cy="450" r="1.1" fill="#d6d6d6"/>
<circle cx="12.4" cy="450" r="1.1" fill="#d6d6d6"/>
<circle cx="15.8" cy="450" r="1.1" fill="#d6d6d6"/>
<path d="M20.8,456.4 v-2.2 l-2.2,2.2 z" fill="#b5b5b5"/>
</g>
<rect x="4.2" y="462.6" width="3.6" height="3.6" fill="#e8e8e8"/>
<rect x="6" y="464.4" width="3.6" height="3.6" fill="#111" stroke="#e8e8e8" stroke-width="0.6"/>
<path d="M14.4,464 h3.6 v3.6 M15.8,462.6 l-1.5,1.4 l1.5,1.4 M16.6,466.2 l1.4,1.5 l1.4,-1.5" fill="none" stroke="#d6d6d6" stroke-width="1.1" stroke-linejoin="round" stroke-linecap="round" stroke-width="0.8"/>
<rect x="9.4" y="481" width="11.2" height="12.2" fill="#fafafa" stroke="#3a3a3a" stroke-width="0.8"/>
<rect x="3" y="474" width="11.4" height="11.8" fill="#fafafa" stroke="#3a3a3a" stroke-width="0.8"/>
<rect x="6.2" y="501.6" width="11.6" height="10" rx="1" fill="none" stroke="#d6d6d6" stroke-width="1.1" stroke-linejoin="round" stroke-linecap="round"/><rect x="9" y="504" width="6" height="5.2" fill="none" stroke="#d6d6d6" stroke-width="1.1" stroke-linejoin="round" stroke-linecap="round" stroke-width="0.7" stroke-dasharray="1.2 1"/>
<rect x="6" y="521.4" width="8.4" height="6.8" fill="none" stroke="#d6d6d6" stroke-width="1.1" stroke-linejoin="round" stroke-linecap="round"/><path d="M9.4,519 h8.6 v6.6" fill="none" stroke="#d6d6d6" stroke-width="1.1" stroke-linejoin="round" stroke-linecap="round"/>
<path d="M20.8,531.9 v-2.2 l-2.2,2.2 z" fill="#b5b5b5"/>
<rect x="25" y="60" width="839" height="13" fill="#474747"/>
<rect x="25" y="73" width="12" height="638" fill="#474747"/>
<rect x="25" y="72.5" width="839" height="0.8" fill="#3c3c3c"/>
<rect x="36.6" y="60" width="0.8" height="651" fill="#3c3c3c"/>
<rect x="25" y="60" width="12" height="13" fill="#4a4a4a"/>
<path d="M27,66.5 h8 M31,62.5 v8" stroke="#6a6a6a" stroke-width="0.6" stroke-dasharray="1 1"/>
<g font-size="6.1" fill="#9c9c9c" font-weight="normal">
<text x="46.2" y="70.2" textLength="13.0" lengthAdjust="spacingAndGlyphs">2000</text>
<text x="72.2" y="70.2" textLength="13.0" lengthAdjust="spacingAndGlyphs">1800</text>
<text x="98.2" y="70.2" textLength="13.0" lengthAdjust="spacingAndGlyphs">1600</text>
<text x="124.2" y="70.2" textLength="13.0" lengthAdjust="spacingAndGlyphs">1400</text>
<text x="150.2" y="70.2" textLength="13.0" lengthAdjust="spacingAndGlyphs">1200</text>
<text x="176.2" y="70.2" textLength="13.0" lengthAdjust="spacingAndGlyphs">1000</text>
<text x="202.2" y="70.2" textLength="9.8" lengthAdjust="spacingAndGlyphs">800</text>
<text x="228.2" y="70.2" textLength="9.8" lengthAdjust="spacingAndGlyphs">600</text>
<text x="254.2" y="70.2" textLength="9.8" lengthAdjust="spacingAndGlyphs">400</text>
<text x="280.2" y="70.2" textLength="9.8" lengthAdjust="spacingAndGlyphs">200</text>
<text x="306.2" y="70.2" textLength="3.2" lengthAdjust="spacingAndGlyphs">0</text>
<text x="332.2" y="70.2" textLength="9.8" lengthAdjust="spacingAndGlyphs">200</text>
<text x="358.2" y="70.2" textLength="9.8" lengthAdjust="spacingAndGlyphs">400</text>
<text x="384.2" y="70.2" textLength="9.8" lengthAdjust="spacingAndGlyphs">600</text>
<text x="410.2" y="70.2" textLength="9.8" lengthAdjust="spacingAndGlyphs">800</text>
<text x="436.2" y="70.2" textLength="13.0" lengthAdjust="spacingAndGlyphs">1000</text>
<text x="462.2" y="70.2" textLength="13.0" lengthAdjust="spacingAndGlyphs">1200</text>
<text x="488.2" y="70.2" textLength="13.0" lengthAdjust="spacingAndGlyphs">1400</text>
<text x="514.2" y="70.2" textLength="13.0" lengthAdjust="spacingAndGlyphs">1600</text>
<text x="540.2" y="70.2" textLength="13.0" lengthAdjust="spacingAndGlyphs">1800</text>
<text x="566.2" y="70.2" textLength="13.0" lengthAdjust="spacingAndGlyphs">2000</text>
<text x="592.2" y="70.2" textLength="13.0" lengthAdjust="spacingAndGlyphs">2200</text>
<text x="618.2" y="70.2" textLength="13.0" lengthAdjust="spacingAndGlyphs">2400</text>
<text x="644.2" y="70.2" textLength="13.0" lengthAdjust="spacingAndGlyphs">2600</text>
<text x="670.2" y="70.2" textLength="13.0" lengthAdjust="spacingAndGlyphs">2800</text>
<text x="696.2" y="70.2" textLength="13.0" lengthAdjust="spacingAndGlyphs">3000</text>
<text x="722.2" y="70.2" textLength="13.0" lengthAdjust="spacingAndGlyphs">3200</text>
<text x="748.2" y="70.2" textLength="13.0" lengthAdjust="spacingAndGlyphs">3400</text>
<text x="774.2" y="70.2" textLength="13.0" lengthAdjust="spacingAndGlyphs">3600</text>
<text x="800.2" y="70.2" textLength="13.0" lengthAdjust="spacingAndGlyphs">3800</text>
<text x="826.2" y="70.2" textLength="13.0" lengthAdjust="spacingAndGlyphs">4000</text>
<text x="852.2" y="70.2" textLength="9.8" lengthAdjust="spacingAndGlyphs">420</text>
<text x="27.4" y="80.2">8</text>
<text x="27.4" y="87.7">0</text>
<text x="27.4" y="95.2">0</text>
<text x="27.4" y="108.8">6</text>
<text x="27.4" y="116.3">0</text>
<text x="27.4" y="123.8">0</text>
<text x="27.4" y="137.4">4</text>
<text x="27.4" y="144.9">0</text>
<text x="27.4" y="152.4">0</text>
<text x="27.4" y="166.0">2</text>
<text x="27.4" y="173.5">0</text>
<text x="27.4" y="181.0">0</text>
<text x="27.4" y="194.6">0</text>
<text x="27.4" y="223.2">2</text>
<text x="27.4" y="230.7">0</text>
<text x="27.4" y="238.2">0</text>
<text x="27.4" y="251.8">4</text>
<text x="27.4" y="259.3">0</text>
<text x="27.4" y="266.8">0</text>
<text x="27.4" y="280.4">6</text>
<text x="27.4" y="287.9">0</text>
<text x="27.4" y="295.4">0</text>
<text x="27.4" y="309.0">8</text>
<text x="27.4" y="316.5">0</text>
<text x="27.4" y="324.0">0</text>
<text x="27.4" y="337.6">1</text>
<text x="27.4" y="343.9">0</text>
<text x="27.4" y="350.2">0</text>
<text x="27.4" y="356.5">0</text>
<text x="27.4" y="366.2">1</text>
<text x="27.4" y="372.5">2</text>
<text x="27.4" y="378.8">0</text>
<text x="27.4" y="385.1">0</text>
<text x="27.4" y="394.8">1</text>
<text x="27.4" y="401.1">4</text>
<text x="27.4" y="407.4">0</text>
<text x="27.4" y="413.7">0</text>
<text x="27.4" y="423.4">1</text>
<text x="27.4" y="429.7">6</text>
<text x="27.4" y="436.0">0</text>
<text x="27.4" y="442.3">0</text>
<text x="27.4" y="452.0">1</text>
<text x="27.4" y="458.3">8</text>
<text x="27.4" y="464.6">0</text>
<text x="27.4" y="470.9">0</text>
<text x="27.4" y="480.6">2</text>
<text x="27.4" y="486.9">0</text>
<text x="27.4" y="493.2">0</text>
<text x="27.4" y="499.5">0</text>
<text x="27.4" y="509.2">2</text>
<text x="27.4" y="515.5">2</text>
<text x="27.4" y="521.8">0</text>
<text x="27.4" y="528.1">0</text>
<text x="27.4" y="537.8">2</text>
<text x="27.4" y="544.1">4</text>
<text x="27.4" y="550.4">0</text>
<text x="27.4" y="556.7">0</text>
<text x="27.4" y="566.4">2</text>
<text x="27.4" y="572.7">6</text>
<text x="27.4" y="579.0">0</text>
<text x="27.4" y="585.3">0</text>
<text x="27.4" y="595.0">2</text>
<text x="27.4" y="601.3">8</text>
<text x="27.4" y="607.6">0</text>
<text x="27.4" y="613.9">0</text>
<text x="27.4" y="623.6">3</text>
<text x="27.4" y="629.9">0</text>
<text x="27.4" y="636.2">0</text>
<text x="27.4" y="642.5">0</text>
<text x="27.4" y="652.2">3</text>
<text x="27.4" y="658.5">2</text>
<text x="27.4" y="664.8">0</text>
<text x="27.4" y="671.1">0</text>
<text x="27.4" y="680.8">3</text>
<text x="27.4" y="687.1">4</text>
<text x="27.4" y="693.4">0</text>
<text x="27.4" y="699.7">0</text>
<text x="27.4" y="709.4">3</text>
<text x="27.4" y="715.7">6</text>
<text x="27.4" y="722.0">0</text>
<text x="27.4" y="728.3">0</text>
</g>
<path d="M44.5,60.5v12M51.0,70v2.5M57.5,68.5v4M64.0,70v2.5M70.5,60.5v12M77.0,70v2.5M83.5,68.5v4M90.0,70v2.5M96.5,60.5v12M103.0,70v2.5M109.5,68.5v4M116.0,70v2.5M122.5,60.5v12M129.0,70v2.5M135.5,68.5v4M142.0,70v2.5M148.5,60.5v12M155.0,70v2.5M161.5,68.5v4M168.0,70v2.5M174.5,60.5v12M181.0,70v2.5M187.5,68.5v4M194.0,70v2.5M200.5,60.5v12M207.0,70v2.5M213.5,68.5v4M220.0,70v2.5M226.5,60.5v12M233.0,70v2.5M239.5,68.5v4M246.0,70v2.5M252.5,60.5v12M259.0,70v2.5M265.5,68.5v4M272.0,70v2.5M278.5,60.5v12M285.0,70v2.5M291.5,68.5v4M298.0,70v2.5M304.5,60.5v12M311.0,70v2.5M317.5,68.5v4M324.0,70v2.5M330.5,60.5v12M337.0,70v2.5M343.5,68.5v4M350.0,70v2.5M356.5,60.5v12M363.0,70v2.5M369.5,68.5v4M376.0,70v2.5M382.5,60.5v12M389.0,70v2.5M395.5,68.5v4M402.0,70v2.5M408.5,60.5v12M415.0,70v2.5M421.5,68.5v4M428.0,70v2.5M434.5,60.5v12M441.0,70v2.5M447.5,68.5v4M454.0,70v2.5M460.5,60.5v12M467.0,70v2.5M473.5,68.5v4M480.0,70v2.5M486.5,60.5v12M493.0,70v2.5M499.5,68.5v4M506.0,70v2.5M512.5,60.5v12M519.0,70v2.5M525.5,68.5v4M532.0,70v2.5M538.5,60.5v12M545.0,70v2.5M551.5,68.5v4M558.0,70v2.5M564.5,60.5v12M571.0,70v2.5M577.5,68.5v4M584.0,70v2.5M590.5,60.5v12M597.0,70v2.5M603.5,68.5v4M610.0,70v2.5M616.5,60.5v12M623.0,70v2.5M629.5,68.5v4M636.0,70v2.5M642.5,60.5v12M649.0,70v2.5M655.5,68.5v4M662.0,70v2.5M668.5,60.5v12M675.0,70v2.5M681.5,68.5v4M688.0,70v2.5M694.5,60.5v12M701.0,70v2.5M707.5,68.5v4M714.0,70v2.5M720.5,60.5v12M727.0,70v2.5M733.5,68.5v4M740.0,70v2.5M746.5,60.5v12M753.0,70v2.5M759.5,68.5v4M766.0,70v2.5M772.5,60.5v12M779.0,70v2.5M785.5,68.5v4M792.0,70v2.5M798.5,60.5v12M805.0,70v2.5M811.5,68.5v4M818.0,70v2.5M824.5,60.5v12M831.0,70v2.5M837.5,68.5v4M844.0,70v2.5M850.5,60.5v12M857.0,70v2.5M34,80.2h2.6M32.5,87.4h4M34,94.5h2.6M25.5,101.7h11M34,108.8h2.6M32.5,116.0h4M34,123.1h2.6M25.5,130.3h11M34,137.5h2.6M32.5,144.6h4M34,151.8h2.6M25.5,158.9h11M34,166.1h2.6M32.5,173.2h4M34,180.4h2.6M25.5,187.5h11M34,194.7h2.6M32.5,201.8h4M34,208.9h2.6M25.5,216.1h11M34,223.2h2.6M32.5,230.4h4M34,237.6h2.6M25.5,244.7h11M34,251.8h2.6M32.5,259.0h4M34,266.1h2.6M25.5,273.3h11M34,280.4h2.6M32.5,287.6h4M34,294.8h2.6M25.5,301.9h11M34,309.0h2.6M32.5,316.2h4M34,323.3h2.6M25.5,330.5h11M34,337.6h2.6M32.5,344.8h4M34,351.9h2.6M25.5,359.1h11M34,366.2h2.6M32.5,373.4h4M34,380.6h2.6M25.5,387.7h11M34,394.9h2.6M32.5,402.0h4M34,409.2h2.6M25.5,416.3h11M34,423.4h2.6M32.5,430.6h4M34,437.8h2.6M25.5,444.9h11M34,452.1h2.6M32.5,459.2h4M34,466.4h2.6M25.5,473.5h11M34,480.6h2.6M32.5,487.8h4M34,494.9h2.6M25.5,502.1h11M34,509.2h2.6M32.5,516.4h4M34,523.6h2.6M25.5,530.7h11M34,537.9h2.6M32.5,545.0h4M34,552.2h2.6M25.5,559.3h11M34,566.4h2.6M32.5,573.6h4M34,580.8h2.6M25.5,587.9h11M34,595.1h2.6M32.5,602.2h4M34,609.4h2.6M25.5,616.5h11M34,623.6h2.6M32.5,630.8h4M34,638.0h2.6M25.5,645.1h11M34,652.2h2.6M32.5,659.4h4M34,666.6h2.6M25.5,673.7h11M34,680.9h2.6M32.5,688.0h4M34,695.2h2.6M25.5,702.3h11M34,709.5h2.6" stroke="#6c6c6c" stroke-width="0.6" fill="none" opacity="0.7"/>
<rect x="25" y="711" width="846" height="9" fill="#535353"/>
<rect x="25" y="711" width="835" height="0.8" fill="#3e3e3e"/>
<rect x="56" y="712" width="114" height="8" fill="#595959"/>
<text x="29.5" y="718.6" textLength="20.5" lengthAdjust="spacingAndGlyphs" font-size="6.2" fill="#f0f0f0" font-weight="bold">20.66%</text>
<text x="71" y="718.8" textLength="76.0" lengthAdjust="spacingAndGlyphs" font-size="6.2" fill="#cfcfcf" font-weight="bold">2232 px x 2854 px (250 ppi)</text>
<path d="M164.6,714 l2,1.9 l-2,1.9" fill="none" stroke="#c0c0c0" stroke-width="0.9"/>
</svg>
<svg class="abs" style="left:858px;top:40px" width="222" height="680" viewBox="858 40 222 680" font-family="Liberation Sans, sans-serif">
<rect x="858" y="40" width="222" height="680" fill="#404040"/>
<rect x="858" y="40" width="13" height="20" fill="#404040"/>
<rect x="858" y="60" width="11.4" height="13" fill="#474747"/>
<rect x="858.4" y="73" width="11" height="647" fill="#494949"/>
<rect x="869.4" y="49" width="1.4" height="671" fill="#3c3c3c"/>
<rect x="870.8" y="49" width="24.8" height="671" fill="#535353"/>
<rect x="895.4" y="49" width="1" height="671" fill="#434343"/>
<rect x="872" y="49.5" width="23" height="46.5" fill="#535353"/>
<rect x="876" y="51.0" width="15" height="0.8" fill="#6a6a6a"/>
<rect x="872" y="98.5" width="23" height="46.0" fill="#535353"/>
<rect x="876" y="100.0" width="15" height="0.8" fill="#6a6a6a"/>
<rect x="872" y="147" width="23" height="26.5" fill="#535353"/>
<rect x="876" y="148.5" width="15" height="0.8" fill="#6a6a6a"/>
<rect x="872" y="176" width="23" height="25.5" fill="#535353"/>
<rect x="876" y="177.5" width="15" height="0.8" fill="#6a6a6a"/>
<rect x="870.8" y="96.2" width="24.6" height="2.2" fill="#434343"/>
<rect x="870.8" y="144.6" width="24.6" height="2.2" fill="#434343"/>
<rect x="870.8" y="173.6" width="24.6" height="2.2" fill="#434343"/>
<rect x="870.8" y="201.6" width="24.6" height="2.2" fill="#434343"/>
<path d="M886.6,43.4 l-1.6,1.6 l1.6,1.6 M889.2,43.4 l-1.6,1.6 l1.6,1.6" fill="none" stroke="#bdbdbd" stroke-width="0.8"/>
<path d="M1066,43.4 l1.6,1.6 l-1.6,1.6 M1068.6,43.4 l1.6,1.6 l-1.6,1.6" fill="none" stroke="#bdbdbd" stroke-width="0.8"/>
<path d="M876.4,57 h4.6 M876.4,59 h3.8 M876.4,61 h3" fill="none" stroke="#d6d6d6" stroke-width="1.1" stroke-linecap="round" stroke-linejoin="round" stroke-width="0.8"/><path d="M890.6,57.6 l1.2,1.2 l-6,6.6 l-1.8,-1.8 z M883.2,64.4 l1.6,1.6 c-0.5,1.9 -2.6,2.8 -4.6,2.3 c1.3,-0.7 1.3,-3 3,-3.9 z" fill="#d6d6d6"/>
<path d="M876.6,78.4 h14 M876.6,84.6 h14" fill="none" stroke="#d6d6d6" stroke-width="1.1" stroke-linecap="round" stroke-linejoin="round" stroke-width="1"/><path d="M879,76.6 l2.6,1.8 l-2.6,1.8 z" fill="#d6d6d6"/><path d="M889.6,82.2 l-3.2,2.4 l3.2,2.4 z" fill="#d6d6d6"/><circle cx="879.4" cy="78.4" r="1.6" fill="#d6d6d6"/><circle cx="888.6" cy="84.6" r="1.9" fill="#d6d6d6"/>
<text x="877.6" y="117.6" font-size="11.5" fill="#dcdcdc">A</text>
<rect x="886.4" y="107.6" width="0.9" height="11" fill="#dcdcdc"/>
<text x="878.4" y="136.4" font-size="12" font-weight="bold" fill="#dcdcdc">¶</text>
<text x="877.6" y="165.4" font-size="12.5" font-style="italic" font-family="Liberation Serif, serif" font-weight="bold" fill="#dcdcdc">A</text>
<path d="M883.5,183.2 l4.8,2.4 v5.6 l-4.8,2.6 l-4.8,-2.6 v-5.6 z M878.7,185.6 l4.8,2.4 l4.8,-2.4 M883.5,188 v5.8" fill="none" stroke="#d6d6d6" stroke-width="1.1" stroke-linecap="round" stroke-linejoin="round" stroke-width="1"/>
<rect x="896" y="49" width="179.5" height="20" fill="#404040"/>
<rect x="1010" y="49" width="40" height="21" fill="#535353"/>
<rect x="896" y="69" width="179.5" height="316" fill="#535353"/>
<text x="901" y="61" textLength="17.0" lengthAdjust="spacingAndGlyphs" font-size="6.2" fill="#b4b4b4" font-weight="bold">Swatc</text>
<text x="924" y="61" textLength="17.0" lengthAdjust="spacingAndGlyphs" font-size="6.2" fill="#b4b4b4" font-weight="bold">Gradi</text>
<text x="946" y="61" textLength="18.0" lengthAdjust="spacingAndGlyphs" font-size="6.2" fill="#b4b4b4" font-weight="bold">Patter</text>
<text x="968" y="61" textLength="20.0" lengthAdjust="spacingAndGlyphs" font-size="6.2" fill="#b4b4b4" font-weight="bold">Histor</text>
<text x="992" y="61" textLength="16.0" lengthAdjust="spacingAndGlyphs" font-size="6.2" fill="#b4b4b4" font-weight="bold">Actior</text>
<text x="1014" y="61" textLength="31.0" lengthAdjust="spacingAndGlyphs" font-size="6.4" fill="#f4f4f4" font-weight="bold">Properties</text>
<rect x="1065" y="56.6" width="6.4" height="1" fill="#cfcfcf"/>
<rect x="1065" y="58.7" width="6.4" height="1" fill="#cfcfcf"/>
<rect x="1065" y="60.800000000000004" width="6.4" height="1" fill="#cfcfcf"/>
<rect x="903" y="76" width="12.4" height="12.4" fill="#3a3a3a"/>
<path d="M906.4,78.4 h3.6 l2.6,2.6 v5.4 h-6.2 z M910,78.4 v2.6 h2.6" fill="none" stroke="#e6e6e6" stroke-width="0.9"/>
<text x="920" y="84.2" textLength="29.0" lengthAdjust="spacingAndGlyphs" font-size="6.3" fill="#d0d0d0" font-weight="bold">Document</text>
<rect x="896" y="93" width="170" height="0.9" fill="#474747"/>
<rect x="1066" y="93" width="9" height="275" fill="#4b4b4b"/>
<path d="M1068.4,99 l1.9,-1.9 l1.9,1.9" fill="none" stroke="#6f6f6f" stroke-width="0.9"/>
<rect x="1067.4" y="104" width="6" height="206" fill="#6a6a6a" rx="0.5"/>
<path d="M1068.4,360 l1.9,1.9 l1.9,-1.9" fill="none" stroke="#6f6f6f" stroke-width="0.9"/>
<path d="M902.4,100.6 l1.9,1.9 l1.9,-1.9" fill="none" stroke="#b8b8b8" stroke-width="0.9"/>
<text x="910" y="104.4" textLength="23.0" lengthAdjust="spacingAndGlyphs" font-size="6.6" fill="#f2f2f2" font-weight="bold">Canvas</text>
<text x="929" y="122.4" textLength="5.4" lengthAdjust="spacingAndGlyphs" font-size="6.2" fill="#cfcfcf" font-weight="bold">W</text>
<rect x="938" y="115" width="32.5" height="11.4" fill="#454545"/>
<text x="941" y="122.6" textLength="20.0" lengthAdjust="spacingAndGlyphs" font-size="6.2" fill="#e8e8e8" font-weight="bold">2232 px</text>
<text x="980" y="122.4" textLength="5.0" lengthAdjust="spacingAndGlyphs" font-size="6.2" fill="#cfcfcf" font-weight="bold">X</text>
<rect x="989" y="115" width="31.5" height="11.4" fill="#4d4d4d"/>
<text x="992" y="122.6" textLength="11.0" lengthAdjust="spacingAndGlyphs" font-size="6.2" fill="#6c6c6c" font-weight="bold">0 px</text>
<text x="929.6" y="140.2" textLength="4.8" lengthAdjust="spacingAndGlyphs" font-size="6.2" fill="#cfcfcf" font-weight="bold">H</text>
<rect x="938" y="132.8" width="32.5" height="11.4" fill="#454545"/>
<text x="941" y="140.4" textLength="20.0" lengthAdjust="spacingAndGlyphs" font-size="6.2" fill="#e8e8e8" font-weight="bold">2854 px</text>
<text x="980" y="140.2" textLength="5.0" lengthAdjust="spacingAndGlyphs" font-size="6.2" fill="#cfcfcf" font-weight="bold">Y</text>
<rect x="989" y="132.8" width="31.5" height="11.4" fill="#4d4d4d"/>
<text x="992" y="140.4" textLength="11.0" lengthAdjust="spacingAndGlyphs" font-size="6.2" fill="#6c6c6c" font-weight="bold">0 px</text>
<g fill="none" stroke="#d0d0d0" stroke-width="1.1"><rect x="907.8" y="122.4" width="3.6" height="5" rx="1.8"/><rect x="907.8" y="128.4" width="3.6" height="5" rx="1.8"/><path d="M909.6,125.6 v4.4"/></g>
<rect x="939" y="150" width="13.4" height="17.4" fill="#333333" stroke="#2c2c2c" stroke-width="0.6"/>
<rect x="941.8" y="152.6" width="7.8" height="12" fill="#e4e4e4"/><circle cx="945.7" cy="156.2" r="1.3" fill="#555"/><path d="M943.4,163.2 c0,-3.8 4.6,-3.8 4.6,0 z" fill="#555"/>
<rect x="956.6" y="153.4" width="11.6" height="9.6" fill="#e4e4e4"/><circle cx="962.4" cy="156.6" r="1.3" fill="#555"/><path d="M959.8,162 c0,-3.4 5.2,-3.4 5.2,0 z" fill="#555"/>
<text x="938" y="182.2" textLength="74.0" lengthAdjust="spacingAndGlyphs" font-size="6.2" fill="#dcdcdc" font-weight="bold">Resolution: 250 pixels/inch</text>
<text x="918" y="200.4" textLength="16.4" lengthAdjust="spacingAndGlyphs" font-size="6.2" fill="#cfcfcf" font-weight="bold">Mode</text>
<rect x="939" y="192" width="82" height="12.4" fill="#454545"/>
<text x="943" y="200.4" textLength="28.0" lengthAdjust="spacingAndGlyphs" font-size="6.2" fill="#e8e8e8" font-weight="bold">RGB Color</text>
<path d="M1014.6,197.4 l1.9,1.9 l1.9,-1.9" fill="none" stroke="#b8b8b8" stroke-width="0.9"/>
<rect x="939" y="209.6" width="82" height="12.4" fill="#454545"/>
<text x="943" y="218" textLength="44.0" lengthAdjust="spacingAndGlyphs" font-size="6.2" fill="#e8e8e8" font-weight="bold">16 Bits/Channel</text>
<path d="M1014.6,215 l1.9,1.9 l1.9,-1.9" fill="none" stroke="#b8b8b8" stroke-width="0.9"/>
<text x="926" y="237" textLength="8.4" lengthAdjust="spacingAndGlyphs" font-size="6.2" fill="#cfcfcf" font-weight="bold">Fill</text>
<rect x="940" y="229.4" width="9.6" height="12.4" fill="#4b4b4b" stroke="#5f5f5f" stroke-width="0.5"/>
<rect x="953" y="229" width="68" height="12.4" fill="#454545"/>
<text x="957" y="237.2" textLength="34.0" lengthAdjust="spacingAndGlyphs" font-size="6.2" fill="#e8e8e8" font-weight="bold">Transparent</text>
<path d="M1014.6,234.4 l1.9,1.9 l1.9,-1.9" fill="none" stroke="#b8b8b8" stroke-width="0.9"/>
<rect x="896" y="246.8" width="170" height="0.9" fill="#474747"/>
<path d="M902.4,256 l1.9,1.9 l1.9,-1.9" fill="none" stroke="#b8b8b8" stroke-width="0.9"/>
<text x="910" y="260" textLength="45.0" lengthAdjust="spacingAndGlyphs" font-size="6.6" fill="#f2f2f2" font-weight="bold">Rulers &amp; Grids</text>
<rect x="903" y="270" width="15.4" height="16" fill="#333"/>
<path d="M906,283 v-9.6 h9.6 v3.2 h-6.4 v6.4 z" fill="#e6e6e6"/><path d="M910.6,273.4 v1.6 M912.6,273.4 v1.6 M914.4,273.4 v1.6" stroke="#333" stroke-width="0.6"/>
<g fill="none" stroke="#d8d8d8" stroke-width="0.8"><rect x="925" y="272.4" width="11" height="11"/><path d="M928.7,272.4 v11 M932.3,272.4 v11 M925,276.1 h11 M925,279.7 h11"/><rect x="946" y="272.4" width="10.6" height="11" stroke-dasharray="1.1 0.9"/><rect x="948.6" y="275" width="5.4" height="5.8" stroke-dasharray="1.1 0.9" stroke-width="0.6"/></g>
<rect x="975" y="272" width="46" height="12.6" fill="#454545"/>
<text x="979" y="280.4" textLength="16.0" lengthAdjust="spacingAndGlyphs" font-size="6.2" fill="#e8e8e8" font-weight="bold">Pixels</text>
<path d="M1014.6,277.4 l1.9,1.9 l1.9,-1.9" fill="none" stroke="#b8b8b8" stroke-width="0.9"/>
<rect x="896" y="294" width="170" height="0.9" fill="#474747"/>
<path d="M902.4,303.4 l1.9,1.9 l1.9,-1.9" fill="none" stroke="#b8b8b8" stroke-width="0.9"/>
<text x="910" y="307.4" textLength="21.0" lengthAdjust="spacingAndGlyphs" font-size="6.6" fill="#f2f2f2" font-weight="bold">Guides</text>
<rect x="903" y="317.4" width="15.4" height="16.4" fill="#333"/>
<rect x="944" y="317.4" width="15.4" height="16.4" fill="#333"/>
<g fill="none" stroke="#dedede" stroke-width="0.9"><path d="M908.4,319.6 v12 M905.4,323 h10.6 M905.4,328.4 h10.6"/><path d="M928.4,319.6 v12 M932.6,319.6 v9 M925.4,323 h10.6 M925.4,328.4 h8"/><path d="M949,319.6 v12 M946.4,323 h3 M951,323.6 h4 v6 M953.4,328 l1.6,1.8 l1.6,-1.8"/></g>
<rect x="933.4" y="328.6" width="3" height="3" fill="#e6e6e6"/>
<rect x="975" y="319.6" width="46" height="14" fill="#454545"/>
<rect x="979" y="326" width="26" height="1.6" fill="#ececec"/>
<path d="M1014.6,325.4 l1.9,1.9 l1.9,-1.9" fill="none" stroke="#b8b8b8" stroke-width="0.9"/>
<rect x="896" y="341.2" width="170" height="0.9" fill="#474747"/>
<path d="M902.4,350.6 l1.9,1.9 l1.9,-1.9" fill="none" stroke="#b8b8b8" stroke-width="0.9"/>
<text x="910" y="354.4" textLength="43.0" lengthAdjust="spacingAndGlyphs" font-size="6.6" fill="#f2f2f2" font-weight="bold">Quick Actions</text>
<rect x="896" y="385" width="179.5" height="3" fill="#404040"/>
<rect x="896" y="387" width="179.5" height="19.6" fill="#404040"/>
<rect x="896" y="387" width="29" height="20" fill="#535353"/>
<rect x="896" y="406.4" width="179.5" height="313.6" fill="#535353"/>
<text x="901" y="399.2" textLength="19.0" lengthAdjust="spacingAndGlyphs" font-size="6.6" fill="#f4f4f4" font-weight="bold">Layers</text>
<rect x="1065" y="394.6" width="6.4" height="1" fill="#cfcfcf"/>
<rect x="1065" y="396.70000000000005" width="6.4" height="1" fill="#cfcfcf"/>
<rect x="1065" y="398.8" width="6.4" height="1" fill="#cfcfcf"/>
<rect x="899" y="413" width="53.4" height="13.2" fill="#454545"/>
<circle cx="905.6" cy="419" r="1.9" fill="none" stroke="#e8e8e8" stroke-width="1"/><path d="M907,420.6 l1.7,1.8" stroke="#e8e8e8" stroke-width="1.1"/>
<text x="911.4" y="422" textLength="13.2" lengthAdjust="spacingAndGlyphs" font-size="6.4" fill="#ededed" font-weight="bold">Kind</text>
<path d="M945.4,418.8 l1.9,1.9 l1.9,-1.9" fill="none" stroke="#b8b8b8" stroke-width="0.9"/>
<g fill="none" stroke="#dcdcdc" stroke-width="0.9"><rect x="959.4" y="416" width="7.8" height="6.6"/><path d="M960.4,421.4 l2,-2.2 l1.6,1.4 l1.2,-1 l1.4,1.8" stroke-width="0.7"/><circle cx="979" cy="419.6" r="3.2"/><rect x="1005.6" y="416.4" width="6.8" height="6.4"/><path d="M1021.4,416 h4 l2,2 v5 h-6 z"/></g>
<path d="M979,416.4 a3.2,3.2 0 0 1 0,6.4 z" fill="#dcdcdc"/>
<text x="990.4" y="423.4" font-family="Liberation Serif, serif" font-weight="bold" font-size="9" fill="#e2e2e2">T</text>
<rect x="1004.7" y="415.5" width="1.8" height="1.8" fill="#e2e2e2"/>
<rect x="1011.5" y="415.5" width="1.8" height="1.8" fill="#e2e2e2"/>
<rect x="1004.7" y="421.90000000000003" width="1.8" height="1.8" fill="#e2e2e2"/>
<rect x="1011.5" y="421.90000000000003" width="1.8" height="1.8" fill="#e2e2e2"/>
<rect x="1023" y="419.4" width="3.6" height="3.6" fill="#dcdcdc"/>
<circle cx="1038.4" cy="415.4" r="2.4" fill="#e8e8e8"/><rect x="1036.6" y="414" width="3.6" height="6.6" rx="1.8" fill="none" stroke="#707070" stroke-width="0.6"/>
<rect x="896" y="428" width="170" height="0.9" fill="#474747"/>
<rect x="899" y="433" width="79" height="13" fill="#4e4e4e" stroke="#5c5c5c" stroke-width="0.5"/>
<text x="903" y="441.6" textLength="20.0" lengthAdjust="spacingAndGlyphs" font-size="6.2" fill="#7d7d7d" font-weight="bold">Normal</text>
<path d="M970.6,438.4 l1.9,1.9 l1.9,-1.9" fill="none" stroke="#707070" stroke-width="0.9"/>
<text x="982" y="441.6" textLength="23.0" lengthAdjust="spacingAndGlyphs" font-size="6.2" fill="#7d7d7d" font-weight="bold">Opacity:</text>
<rect x="1009" y="433.6" width="21" height="12" fill="#494949"/>
<text x="1012" y="441.6" textLength="14.0" lengthAdjust="spacingAndGlyphs" font-size="6" fill="#6a6a6a" font-weight="bold">100%</text>
<path d="M1033,438.6 l1.9,1.9 l1.9,-1.9" fill="none" stroke="#666" stroke-width="0.9"/>
<rect x="896" y="449.4" width="170" height="0.9" fill="#4a4a4a"/>
<text x="899" y="461.4" textLength="14.0" lengthAdjust="spacingAndGlyphs" font-size="6.2" fill="#7d7d7d" font-weight="bold">Lock:</text>
<g fill="#c8c8c8">
<rect x="919.6" y="455.0" width="2.4" height="2.4" fill="#c8c8c8"/>
<rect x="919.6" y="459.8" width="2.4" height="2.4" fill="#c8c8c8"/>
<rect x="922.0" y="457.4" width="2.4" height="2.4" fill="#c8c8c8"/>
<rect x="924.4" y="455.0" width="2.4" height="2.4" fill="#c8c8c8"/>
<rect x="924.4" y="459.8" width="2.4" height="2.4" fill="#c8c8c8"/>
</g>
<rect x="919.6" y="455" width="7.2" height="7.2" fill="none" stroke="#c8c8c8" stroke-width="0.6"/>
<path d="M940.6,454.4 l1,1 l-4.6,5.2 l-1.4,-1.4 z M935.2,459.8 l1.2,1.2 c-0.4,1.4 -1.8,2 -3.4,1.7 c1,-0.5 1,-2.2 2.2,-2.9 z" fill="#c8c8c8"/>
<g stroke="#c8c8c8" stroke-width="0.9" fill="#c8c8c8"><path d="M951,454.6 v8 M947,458.6 h8" fill="none"/><path d="M951,453.4l1.4,1.7h-2.8zM951,463.8l1.4,-1.7h-2.8zM945.8,458.6l1.7,-1.4v2.8zM956.2,458.6l-1.7,-1.4v2.8z" stroke="none"/></g>
<path d="M961.6,456.6 h6.4 v5.6 M963.4,454.8 v6 h6.6" fill="none" stroke="#c8c8c8" stroke-width="0.9"/>
<rect x="976" y="458" width="6.4" height="5" fill="#c8c8c8" rx="0.6"/><path d="M977.4,458 v-1.4 a1.8,1.8 0 0 1 3.6,0 v1.4" fill="none" stroke="#c8c8c8" stroke-width="0.9"/>
<text x="996" y="461.4" textLength="10.0" lengthAdjust="spacingAndGlyphs" font-size="6.2" fill="#7d7d7d" font-weight="bold">Fill:</text>
<rect x="1009" y="453.6" width="21" height="12" fill="#494949"/>
<text x="1012" y="461.6" textLength="14.0" lengthAdjust="spacingAndGlyphs" font-size="6" fill="#6a6a6a" font-weight="bold">100%</text>
<path d="M1033,458.6 l1.9,1.9 l1.9,-1.9" fill="none" stroke="#666" stroke-width="0.9"/>
<rect x="896" y="469.6" width="179.5" height="0.9" fill="#434343"/>
<rect x="916" y="470.4" width="0.9" height="236" fill="#4a4a4a"/>
<path d="M901.1999999999999,478.6 c2,-3.2 6.4,-3.2 8.4,0 c-2,3.2 -6.4,3.2 -8.4,0 z" fill="none" stroke="#b4b4b4" stroke-width="0.9"/><circle cx="905.4" cy="478.6" r="1.4" fill="#b4b4b4"/>
<path d="M927,476.8 l1.9,1.9 l1.9,-1.9" fill="none" stroke="#b8b8b8" stroke-width="0.9"/>
<path d="M934.4,475 h3 l1,1.2 h5 v6.6 h-9 z" fill="#e0e0e0"/><path d="M935.4,478.2 h8 l-1,4.6 h-8 z" fill="#f2f2f2" stroke="#535353" stroke-width="0.5"/>
<text x="951" y="481" textLength="25.0" lengthAdjust="spacingAndGlyphs" font-size="6.3" fill="#e4e4e4" font-weight="bold">edita text</text>
<rect x="896" y="487.4" width="170" height="0.9" fill="#474747"/>
<rect x="896" y="516" width="170" height="0.9" fill="#474747"/>
<rect x="896" y="544.4" width="170" height="0.9" fill="#474747"/>
<rect x="896" y="572.4" width="170" height="0.9" fill="#474747"/>
<rect x="896" y="601" width="170" height="0.9" fill="#474747"/>
<rect x="896" y="629.6" width="170" height="0.9" fill="#474747"/>
<rect x="896" y="658.2" width="170" height="0.9" fill="#474747"/>
<rect x="896" y="686.8" width="170" height="0.9" fill="#474747"/>
<path d="M901.1999999999999,501.6 c2,-3.2 6.4,-3.2 8.4,0 c-2,3.2 -6.4,3.2 -8.4,0 z" fill="none" stroke="#b4b4b4" stroke-width="0.9"/><circle cx="905.4" cy="501.6" r="1.4" fill="#b4b4b4"/>
<text x="947" y="506.0" text-anchor="middle" font-family="Liberation Serif, serif" font-size="13.5" fill="#e6e6e6">T</text>
<text x="962" y="504.0" textLength="19.0" lengthAdjust="spacingAndGlyphs" font-size="6.2" fill="#e4e4e4" font-weight="bold">Layer 2</text>
<path d="M901.1999999999999,530 c2,-3.2 6.4,-3.2 8.4,0 c-2,3.2 -6.4,3.2 -8.4,0 z" fill="none" stroke="#b4b4b4" stroke-width="0.9"/><circle cx="905.4" cy="530" r="1.4" fill="#b4b4b4"/>
<defs><pattern id="lchk" x="937" y="519.4" width="3.4" height="3.4" patternUnits="userSpaceOnUse"><rect width="3.4" height="3.4" fill="#fff"/><rect width="1.7" height="1.7" fill="#ccc"/><rect x="1.7" y="1.7" width="1.7" height="1.7" fill="#ccc"/></pattern></defs>
<rect x="937" y="519.4" width="16.4" height="20.6" fill="url(#lchk)" stroke="#e8e8e8" stroke-width="0.6"/>
<rect x="939" y="521" width="3" height="4" fill="#6a5a4a"/>
<text x="958" y="532.4" textLength="19.0" lengthAdjust="spacingAndGlyphs" font-size="6.2" fill="#e4e4e4" font-weight="bold">Layer 3</text>
<path d="M901.1999999999999,557.8 c2,-3.2 6.4,-3.2 8.4,0 c-2,3.2 -6.4,3.2 -8.4,0 z" fill="none" stroke="#b4b4b4" stroke-width="0.9"/><circle cx="905.4" cy="557.8" r="1.4" fill="#b4b4b4"/>
<text x="947" y="562.1999999999999" text-anchor="middle" font-family="Liberation Serif, serif" font-size="13.5" fill="#e6e6e6">T</text>
<text x="962" y="560.1999999999999" textLength="81.0" lengthAdjust="spacingAndGlyphs" font-size="6.2" fill="#e4e4e4" font-weight="bold">citta0000000...&lt;&lt;&lt;&lt;&lt;&lt;&lt;&lt;0 d</text>
<text x="947" y="591.1999999999999" text-anchor="middle" font-family="Liberation Serif, serif" font-size="13.5" fill="#e6e6e6">T</text>
<text x="962" y="589.1999999999999" textLength="8.0" lengthAdjust="spacingAndGlyphs" font-size="6.2" fill="#e4e4e4" font-weight="bold">1aa</text>
<path d="M901.1999999999999,615 c2,-3.2 6.4,-3.2 8.4,0 c-2,3.2 -6.4,3.2 -8.4,0 z" fill="none" stroke="#b4b4b4" stroke-width="0.9"/><circle cx="905.4" cy="615" r="1.4" fill="#b4b4b4"/>
<text x="947" y="619.4" text-anchor="middle" font-family="Liberation Serif, serif" font-size="13.5" fill="#e6e6e6">T</text>
<text x="962" y="617.4" textLength="9.0" lengthAdjust="spacingAndGlyphs" font-size="6.2" fill="#e4e4e4" font-weight="bold">169</text>
<path d="M901.1999999999999,643.8 c2,-3.2 6.4,-3.2 8.4,0 c-2,3.2 -6.4,3.2 -8.4,0 z" fill="none" stroke="#b4b4b4" stroke-width="0.9"/><circle cx="905.4" cy="643.8" r="1.4" fill="#b4b4b4"/>
<text x="947" y="648.1999999999999" text-anchor="middle" font-family="Liberation Serif, serif" font-size="13.5" fill="#e6e6e6">T</text>
<text x="962" y="646.1999999999999" textLength="4.0" lengthAdjust="spacingAndGlyphs" font-size="6.2" fill="#e4e4e4" font-weight="bold">m</text>
<path d="M901.1999999999999,672.5 c2,-3.2 6.4,-3.2 8.4,0 c-2,3.2 -6.4,3.2 -8.4,0 z" fill="none" stroke="#b4b4b4" stroke-width="0.9"/><circle cx="905.4" cy="672.5" r="1.4" fill="#b4b4b4"/>
<text x="947" y="676.9" text-anchor="middle" font-family="Liberation Serif, serif" font-size="13.5" fill="#e6e6e6">T</text>
<text x="962" y="674.9" textLength="19.0" lengthAdjust="spacingAndGlyphs" font-size="6.2" fill="#e4e4e4" font-weight="bold">128 cm</text>
<path d="M901.1999999999999,700.8 c2,-3.2 6.4,-3.2 8.4,0 c-2,3.2 -6.4,3.2 -8.4,0 z" fill="none" stroke="#b4b4b4" stroke-width="0.9"/><circle cx="905.4" cy="700.8" r="1.4" fill="#b4b4b4"/>
<text x="947" y="705.1999999999999" text-anchor="middle" font-family="Liberation Serif, serif" font-size="13.5" fill="#e6e6e6">T</text>
<text x="962" y="703.1999999999999" textLength="29.0" lengthAdjust="spacingAndGlyphs" font-size="6.2" fill="#e4e4e4" font-weight="bold">01.01.1990</text>
<rect x="1066" y="470.4" width="9" height="236" fill="#4b4b4b"/>
<path d="M1068.4,477 l1.9,-1.9 l1.9,1.9" fill="none" stroke="#6f6f6f" stroke-width="0.9"/>
<rect x="1067.4" y="490" width="6" height="65" fill="#6a6a6a" rx="0.5"/>
<rect x="896" y="706" width="179.5" height="14" fill="#535353"/>
<rect x="896" y="705.6" width="179.5" height="0.8" fill="#474747"/>
<g fill="none" stroke="#6f6f6f" stroke-width="1"><rect x="948.6" y="711" width="4" height="3.6" rx="1.6"/><rect x="952.4" y="711" width="4" height="3.6" rx="1.6"/></g>
<text x="966" y="716.6" font-size="8" font-style="italic" font-family="Liberation Serif, serif" fill="#7a7a7a">fx</text>
<rect x="982" y="708.6" width="9" height="8" fill="none" stroke="#dcdcdc" stroke-width="1"/><circle cx="986.5" cy="712.6" r="2.2" fill="#dcdcdc"/>
<circle cx="1003.4" cy="712.6" r="3.8" fill="none" stroke="#dcdcdc" stroke-width="1"/><path d="M1003.4,708.8 a3.8,3.8 0 0 0 0,7.6 z" fill="#dcdcdc"/>
<path d="M1015.6,709 h3.2 l1,1.2 h5 v6.6 h-9.2 z" fill="#e0e0e0"/>
<rect x="1033" y="708.6" width="8.4" height="8.4" fill="none" stroke="#dcdcdc" stroke-width="1"/><path d="M1037.2,710.6 v4.4 M1035,712.8 h4.4" stroke="#dcdcdc" stroke-width="1"/>
<path d="M1051,710.4 h6.4 M1053,710.4 v-1.2 h2.4 v1.2 M1051.8,710.6 l0.5,6.4 h3.8 l0.5,-6.4" fill="none" stroke="#8a8a8a" stroke-width="0.9"/>
<rect x="1075.5" y="40" width="4.5" height="680" fill="#404040"/>
<rect x="1077.2" y="49" width="2.8" height="671" fill="#4c4c4c"/>
</svg>
<svg class="abs" style="left:840px;top:650px" width="240" height="70" viewBox="840 650 240 70">
<text x="855.3" y="696.8" font-family="DejaVu Sans, Liberation Sans, sans-serif" font-weight="200" font-size="42.6" fill="#1f1f1f" stroke="#1f1f1f" stroke-width="0.8" textLength="141" lengthAdjust="spacingAndGlyphs">EKOGEA.</text>
<text x="996.6" y="696.8" font-family="DejaVu Sans, Liberation Sans, sans-serif" font-weight="200" font-size="42.6" fill="#7d9a1c" stroke="#7d9a1c" stroke-width="1.7" textLength="73.5" lengthAdjust="spacingAndGlyphs">ORG</text>
</svg>
</div>
</body>
</html>
